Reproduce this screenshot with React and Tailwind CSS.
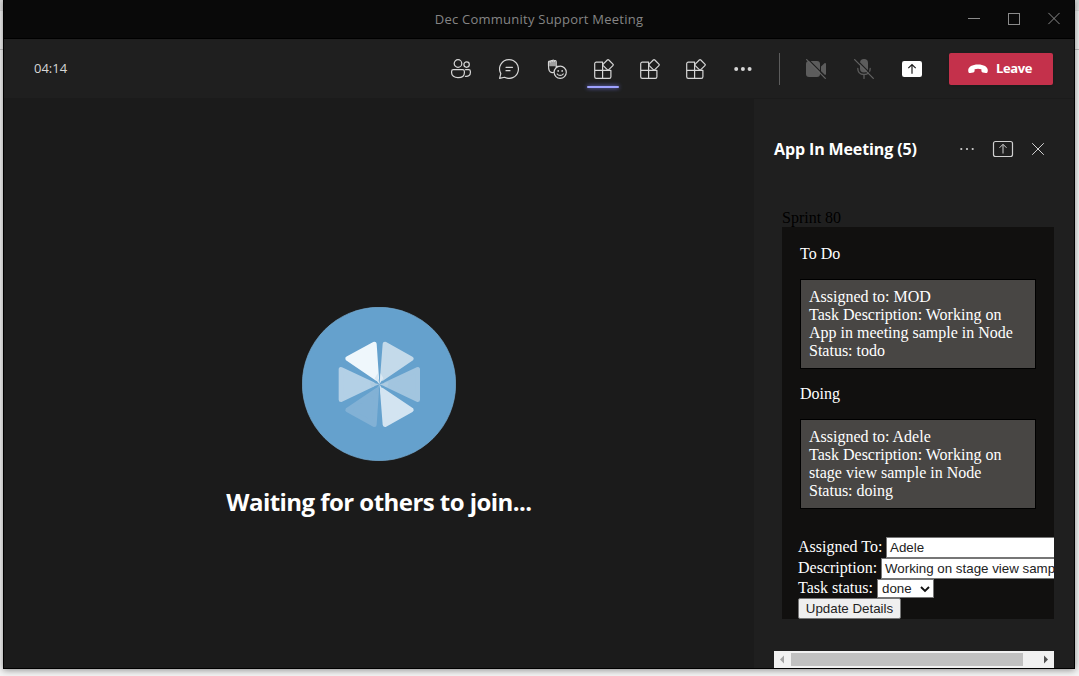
import React from "react";

const line = {
  fill: "none",
  stroke: "currentColor",
  strokeWidth: 1.2,
  strokeLinecap: "round",
  strokeLinejoin: "round",
};

function PeopleIcon() {
  return (
    <svg width="20" height="20" viewBox="0 0 20 20" {...line}>
      <circle cx="7" cy="4.5" r="3.8" />
      <circle cx="15.6" cy="5.6" r="2.7" />
      <path d="M2.4 10.7h9.2c1 0 1.8.8 1.8 1.8v1.2c0 3.1-2.6 4.9-6.4 4.9S.6 16.8.6 13.7v-1.2c0-1 .8-1.8 1.8-1.8z" />
      <path d="M14.6 10.7h3c1 0 1.8.8 1.8 1.8v.9c0 2.7-1.8 4.2-5 3.9" />
    </svg>
  );
}

function ChatIcon() {
  return (
    <svg width="20" height="20" viewBox="0 0 20 20" {...line}>
      <path d="M10 .6a9.4 9.4 0 1 1-4.5 17.65L.6 19.4l1.2-4.8A9.4 9.4 0 0 1 10 .6z" />
      <path d="M7 8.3h6.5M7 11.7h4" />
    </svg>
  );
}

function ReactIcon() {
  return (
    <svg width="20" height="20" viewBox="0 0 20 20" {...line}>
      <path d="M1.5 6V3.1c0-1.3 1.6-1.3 1.7 0 0-2 1.9-2 2-.7 0-1.9 2-1.9 2.1 0 .2-1.2 1.9-1.1 1.9.4V8l1.4-.6c1.1-.4 1.7.6 1 1.3l-3.5 4c-1.6 1.6-4.7 1.1-5.8-.9C1.5 10.3 1.5 8 1.5 6z" />
      <path d="M2.2 3.2 3.4 2l1.5-1L7 1.5l1.7 1.2v4.500H2.2z" fill="currentColor" fillOpacity="0.7" stroke="none" />
      <circle cx="13.2" cy="13.3" r="6.1" fill="#1f1f1f" />
      <circle cx="11.2" cy="11.9" r="0.9" fill="currentColor" stroke="none" />
      <circle cx="15.2" cy="11.9" r="0.9" fill="currentColor" stroke="none" />
      <path d="M10.2 15c1.4 1.9 4.6 1.9 6 0" />
    </svg>
  );
}

function AppsIcon() {
  return (
    <svg width="20" height="20" viewBox="0 0 20 20" {...line}>
      <path d="M8.6 3.1H2.3C1.4 3.1.7 3.8.7 4.7v13c0 .9.7 1.6 1.6 1.6h13c.9 0 1.6-.7 1.6-1.6v-6.3H.7M8.6 3.1v16.2M8.6 7.2v4.2h4.2" />
      <path d="m13.3 1-4.1 4.1a1.1 1.1 0 0 0 0 1.5l4.1 4.1c.4.4 1.1.4 1.5 0l4.1-4.1c.4-.4.4-1.1 0-1.5L14.8 1a1.1 1.1 0 0 0-1.5 0z" />
    </svg>
  );
}

function MoreIcon() {
  return (
    <svg width="20" height="20" viewBox="0 0 20 20" fill="currentColor">
      <circle cx="3.2" cy="10" r="2" />
      <circle cx="9.9" cy="10" r="2" />
      <circle cx="16.6" cy="10" r="2" />
    </svg>
  );
}

function CameraOffIcon() {
  return (
    <svg width="20" height="20" viewBox="0 0 20 20">
      <rect x="0" y="2" width="14" height="16" rx="3" fill="#5c5c5c" />
      <path d="M15 7.500 18.5 4.3c.6-.5 1.5-.2 1.5.6v10.2c0 .8-.9 1.1-1.5.6L15 12.500z" fill="#5c5c5c" />
      <path d="M1.100-.7 20.700 18.900" stroke="#1f1f1f" strokeWidth="1.2" />
      <path d="M.3.300 19.700 19.700" stroke="#646464" strokeWidth="1.200" />
    </svg>
  );
}

function MicOffIcon() {
  return (
    <svg width="20" height="20" viewBox="0 0 20 20">
      <rect x="6" y="0" width="8" height="13.5" rx="4" fill="#5c5c5c" />
      <path d="M3.8 9.500c0 3.800 2.500 6 6.200 6s6.200-2.200 6.200-6M10 15.500v4" fill="none" stroke="#5c5c5c" strokeWidth="1.3" strokeLinecap="round" />
      <path d="M1.100-.7 20.700 18.900" stroke="#1f1f1f" strokeWidth="1.2" />
      <path d="M.3.300 19.700 19.700" stroke="#646464" strokeWidth="1.2" />
    </svg>
  );
}

function ShareIcon() {
  return (
    <svg width="20" height="16" viewBox="0 0 20 16">
      <rect width="20" height="16" rx="2.2" fill="#fff" />
      <path d="M10 12.700V3.700M6.300 7.200 10 3.500l3.700 3.700" fill="none" stroke="#1f1f1f" strokeWidth="1.2" />
    </svg>
  );
}

function HangUpIcon() {
  return (
    <svg width="20" height="10" viewBox="0 0 20 10" fill="#fff">
      <path d="M10 .6c5.700 0 9.800 2.400 9.800 5.700 0 2.400-.8 3-2.300 2.700l-2.700-.6c-1-.2-1.400-.8-1.400-1.700V5.300C11.300 4.600 8.700 4.600 6.600 5.300v1.400c0 .9-.4 1.500-1.400 1.700L2.500 9C1 9.300.2 8.700.2 6.300.2 3 4.300.6 10 .6z" />
    </svg>
  );
}

function Avatar() {
  return (
    <svg width="154" height="154" viewBox="36 36 462 462" className="block">
      <circle cx="267" cy="267" r="230" fill="#65a1cd" stroke="#79afd6" strokeWidth="2" />
      <g strokeWidth="14" strokeLinejoin="round">
        <path d="M253 147 173 191 260 250z" fill="#eff7fc" stroke="#eff7fc" />
        <path d="M285 147 364 191 277 250z" fill="#c4daea" stroke="#c4daea" />
        <path d="M153 223v91l96-46z" fill="#b3d0e6" stroke="#b3d0e6" />
        <path d="M383 223v91l-96-46z" fill="#a2c5df" stroke="#a2c5df" />
        <path d="M253 389 173 345 260 286z" fill="#82b1d5" stroke="#82b1d5" />
        <path d="M285 389 364 345 277 286z" fill="#d3e4f1" stroke="#d3e4f1" />
      </g>
      <path d="M254 250 268 268 263 235zM280 250 268 268 272 235z" fill="#dbe9f3" />
      <path d="M240 261 268 268 244 277zM296 261 268 268 292 277z" fill="#adcbe1" />
      <path d="M256 286 268 268 263 301z" fill="#82b1d5" />
      <path d="M280 286 268 268 273 301z" fill="#d3e4f1" />
    </svg>
  );
}

function TitleBar() {
  return (
    <header className="flex h-[39px] shrink-0 items-center border-b border-black bg-[#090909]">
      <div className="w-[120px] shrink-0" />
      <h1 className="flex-1 pt-px text-center text-[13px] tracking-[0.24px] text-[#858585]">Dec Community Support Meeting</h1>
      <svg className="mr-[14px] -mt-px w-[106px] shrink-0 text-[#8b8b8b]" height="13" viewBox="0 0 106 13" fill="none" stroke="currentColor">
        <path d="M14 6.500h12M94.400.900l11.200 11.200M105.600.900 94.400 12.100" />
        <rect x="54.500" y="1.500" width="11" height="11" />
      </svg>
    </header>
  );
}

function Tool({ children, wide }) {
  return (
    <button className={wide ? "flex h-full w-12 items-center justify-center" : "flex h-full w-[46px] items-center justify-center"}>
      {children}
    </button>
  );
}

function Toolbar() {
  return (
    <nav className="flex h-[60px] shrink-0 items-center border-b border-[#1b1b1b] bg-[#1f1f1f] pr-[21px] pl-[30px] text-[#d6d6d6]">
      <time className="pt-px text-[13px] font-medium">04:14</time>
      <div className="ml-auto flex h-full items-center">
        <Tool wide><PeopleIcon /></Tool>
        <Tool wide><ChatIcon /></Tool>
        <Tool wide><ReactIcon /></Tool>
        <div className="relative h-full">
          <Tool><AppsIcon /></Tool>
          <span className="absolute bottom-[10px] left-[6px] h-[2px] w-8 rounded-sm bg-[#9ea2ff] shadow-[0_0_4px_#7f85f5]" />
        </div>
        <Tool><AppsIcon /></Tool>
        <Tool><AppsIcon /></Tool>
        <Tool wide><MoreIcon /></Tool>
        <span className="mx-3 h-8 w-px bg-[#5c5c5c]" />
        <Tool wide><CameraOffIcon /></Tool>
        <Tool wide><MicOffIcon /></Tool>
        <Tool wide><ShareIcon /></Tool>
        <button className="ml-[13px] flex h-8 w-[104px] items-center rounded-[2px] bg-[#c4314b] pl-[19px] text-[13px] font-bold tracking-[-0.4px] text-white shadow-sm">
          <HangUpIcon />
          <span className="ml-[8px] pt-px">Leave</span>
        </button>
      </div>
    </nav>
  );
}

function TaskCard({ name, lines }) {
  return (
    <div className="mt-[16px] h-[90px] border border-black bg-[#484644] pt-[8px] pl-2 leading-[18px]">
      <p>Assigned to: {name}</p>
      {lines.map((text) => (
        <p key={text}>{text}</p>
      ))}
    </div>
  );
}

function Board() {
  return (
    <div className="h-[392px] overflow-hidden bg-[#11100f] font-['Liberation_Serif',serif] text-[16px] text-white">
      <div className="px-[18px] pt-[18px]">
        <h3 className="h-[18px] leading-[18px]">To Do</h3>
        <TaskCard name="MOD" lines={["Task Description: Working on", "App in meeting sample in Node", "Status: todo"]} />
        <h3 className="mt-[16px] h-[18px] leading-[18px]">Doing</h3>
        <TaskCard name="Adele" lines={["Task Description: Working on", "stage view sample in Node", "Status: doing"]} />
      </div>
      <div className="mt-[28px] pl-4 whitespace-nowrap">
        <div className="flex h-[21px] items-center">
          <span className="w-[88px] shrink-0 pb-px">Assigned To:</span>
          <span className="flex h-[21px] w-[190px] shrink-0 items-center border border-[#767676] bg-white pl-[3px] font-['Liberation_Sans',sans-serif] text-[13.333px] text-[#222]">Adele</span>
        </div>
        <div className="flex h-[21px] items-center">
          <span className="w-[83px] shrink-0 pb-px">Description:</span>
          <span className="flex h-[21px] w-[200px] shrink-0 items-center border border-[#767676] bg-white pl-[3px] font-['Liberation_Sans',sans-serif] text-[13.333px] text-[#222]">Working on stage view sample</span>
        </div>
        <div className="flex h-[19px] items-center">
          <span className="w-[79px] shrink-0 pb-px">Task status:</span>
          <span className="flex h-[19px] w-[57px] items-center border border-[#767676] bg-white pl-1 font-['Liberation_Sans',sans-serif] text-[13.333px] text-[#222]">
            done
            <svg className="ml-[8px]" width="10" height="8" viewBox="0 0 10 8" fill="none" stroke="#111" strokeWidth="1.9">
              <path d="m1 2 4 4 4-4" />
            </svg>
          </span>
        </div>
        <button className="flex h-[21px] w-[103px] items-center justify-center rounded-[2px] border border-[#767676] bg-[#efefef] font-['Liberation_Sans',sans-serif] text-[13.333px] text-[#222]">
          Update Details
        </button>
      </div>
    </div>
  );
}

function SidePanel() {
  return (
    <aside className="flex w-[320px] shrink-0 flex-col bg-[#1f1f1f] px-5">
      <div className="mt-[40px] flex h-5 items-center">
        <h2 className="text-[16px] font-bold tracking-[-0.12px] whitespace-nowrap text-white">App In Meeting (5)</h2>
        <svg className="mr-2 ml-auto shrink-0" width="86" height="20" viewBox="0 0 86 20" fill="none" stroke="#d0d0d0" strokeWidth="1">
          <g fill="#d0d0d0" stroke="none">
            <circle cx="1.3" cy="10" r="1.1" />
            <circle cx="7" cy="10" r="1.1" />
            <circle cx="12.7" cy="10" r="1.1" />
          </g>
          <rect x="33.5" y="2.5" width="19" height="15" rx="2" strokeWidth="1.2" />
          <path d="M43 14.500V5.500M39.500 8.800 43 5.300l3.500 3.500M72.200 4.200l11.600 11.600M83.800 4.200 72.200 15.800" />
        </svg>
      </div>
      <div className="mt-[50px] pl-2">
        <p className="h-[18px] font-['Liberation_Serif',serif] text-[16px] leading-[18px] text-black">Sprint 80</p>
        <Board />
      </div>
      <div className="mt-auto flex h-[17px] items-center bg-[#f1f1f1]">
        <svg width="17" height="17" viewBox="0 0 17 17" fill="#a3a3a3"><path d="M10 4.500v8L6 8.500z" /></svg>
        <div className="h-[13px] w-[232px] bg-[#c1c1c1]" />
        <svg className="ml-auto" width="17" height="17" viewBox="0 0 17 17" fill="#505050"><path d="M7 4.500v8l4-4z" /></svg>
      </div>
    </aside>
  );
}

export default function App() {
  return (
    <div className="h-[676px] w-[1079px] overflow-hidden bg-[linear-gradient(#d9d9d9_0,#e8e8e8_10px,#c8c8c8_10px,#f2f2f2_11px,#f2f2f2_49px,#c4c4c4_49px,#c4c4c4_50px,#f5f5f5_50px)] pl-[3px] font-['Open_Sans','Noto_Sans',sans-serif]">
      <div className="flex h-[669px] w-[1072px] flex-col border-x border-b border-black bg-[#1b1b1b] shadow-[0_1px_7px_rgba(0,0,0,0.45)]">
        <TitleBar />
        <Toolbar />
        <div className="flex min-h-0 flex-1">
          <main className="flex flex-1 flex-col items-center bg-[#1b1b1b] pt-[208px]">
            <Avatar />
            <p className="mt-[23px] text-[24px] leading-9 font-bold tracking-[-0.55px] text-white">Waiting for others to join...</p>
          </main>
          <SidePanel />
        </div>
      </div>
    </div>
  );
}
